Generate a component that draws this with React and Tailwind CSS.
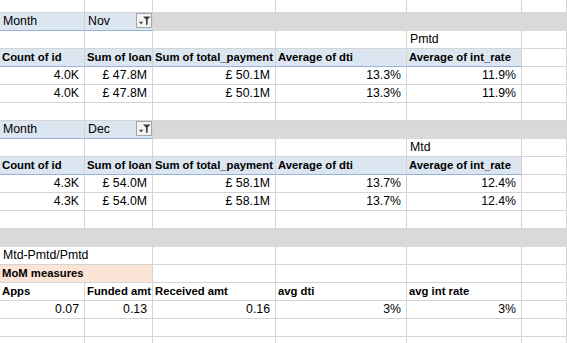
import React from 'react';

// column widths incl. right gridline
const cols = ['w-[85px]', 'w-[68px]', 'w-[123px]', 'w-[131px]', 'w-[115px]', 'flex-1'];

const FilterButton = () => (
  <span className="absolute right-0 top-0 w-[16px] h-[15px] border border-[#a6a6a6] bg-[#f4f4f4] flex items-center justify-center">
    <svg width="13" height="11" viewBox="0 0 13 11">
      <path d="M5 1.5h7.5L9.6 4.6V9.2L8 10.2V4.6z" fill="#3c3c3c" />
      <path d="M1 6.8h4.2L3.1 9.2z" fill="#3c3c3c" />
    </svg>
  </span>
);

const Cell = ({ i, text, bold, right, bg, bb, filter, h = 'h-[18px]', w }) => (
  <div
    className={[
      'relative overflow-hidden whitespace-nowrap leading-[17px] border-r border-b',
      w || cols[i],
      h,
      bg || '',
      bb || 'border-b-[#d4d4d4]',
      bg && bg.startsWith('bg-[#d9d9d9]') ? 'border-r-transparent' : 'border-r-[#d4d4d4]',
      bold ? 'font-bold text-[11.3px] pl-[2px]' : 'text-[12.3px] pl-[3px]',
      right ? 'text-right pr-[5px]' : 'text-left',
    ].join(' ')}
  >
    {text}
    {filter && <FilterButton />}
  </div>
);

const Row = ({ cells = [], h, band, fill }) => (
  <div className="flex">
    {cols.map((_, i) => {
      const c = cells[i] || {};
      let bg = c.bg;
      if (band && i >= band) bg = 'bg-[#d9d9d9] border-b-[#d9d9d9]';
      if (fill) bg = 'bg-[#d9d9d9] border-b-[#d9d9d9]';
      return <Cell key={i} i={i} h={h} {...c} bg={bg} bb={c.bb} />;
    })}
  </div>
);

const blue = 'bg-[#dce6f1]';
const blueLine = 'border-b-[#95b3d7]';

const head = ['Count of id', 'Sum of loan_amount', 'Sum of total_payment', 'Average of dti', 'Average of int_rate'].map(
  (t) => ({ text: t, bold: true, bg: blue, bb: blueLine })
);

const dataRow = (a, b, c, d, e) => [a, b, c, d, e].map((t) => ({ text: t, right: true }));

const Block = ({ month, label, vals }) => (
  <>
    <Row
      band={2}
      cells={[
        { text: 'Month', bg: blue, bb: blueLine },
        { text: month, bg: blue, bb: blueLine, filter: true },
      ]}
    />
    <Row cells={[{}, {}, {}, {}, { text: label }]} />
    <Row cells={head} />
    <Row cells={dataRow(...vals)} />
    <Row cells={dataRow(...vals)} />
    <Row />
  </>
);

export default function App() {
  return (
    <div className="w-[567px] h-[343px] overflow-hidden bg-white text-black" style={{ fontFamily: '"Liberation Sans", Arial, sans-serif' }}>
      <Row h="h-[13px]" />
      <Block month="Nov" label="Pmtd" vals={['4.0K', '£ 47.8M', '£ 50.1M', '13.3%', '11.9%']} />
      <Block month="Dec" label="Mtd" vals={['4.3K', '£ 54.0M', '£ 58.1M', '13.7%', '12.4%']} />
      <Row fill />
      {/* text spills over the empty B cell, as Excel does */}
      <div className="flex">
        <Cell w="w-[153px]" text="Mtd-Pmtd/Pmtd" />
        <Cell i={2} />
        <Cell i={3} />
        <Cell i={4} />
        <Cell i={5} />
      </div>
      <div className="flex">
        <Cell w="w-[153px]" text="MoM measures" bold bg="bg-[#fce4d6]" />
        <Cell i={2} />
        <Cell i={3} />
        <Cell i={4} />
        <Cell i={5} />
      </div>
      <Row
        cells={['Apps', 'Funded amt', 'Received amt', 'avg dti', 'avg int rate'].map((t) => ({ text: t, bold: true }))}
      />
      <Row cells={dataRow('0.07', '0.13', '0.16', '3%', '3%')} />
      <Row />
      <Row />
    </div>
  );
}
